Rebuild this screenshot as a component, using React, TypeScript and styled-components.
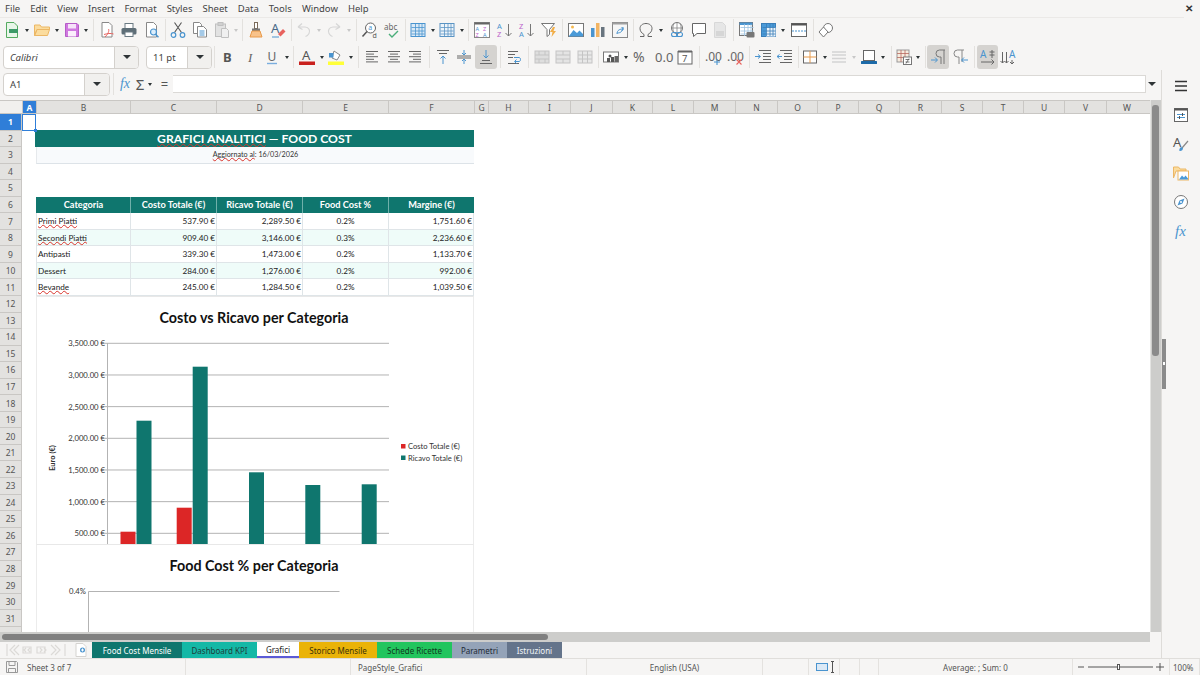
import React from 'react';
import styled, { createGlobalStyle } from 'styled-components';

const GlobalStyle = createGlobalStyle`
  html, body { margin: 0; padding: 0; background: #f6f5f4; }
  body { font-family: "Noto Sans", "Open Sans", sans-serif; color: #3d3d3d; }
`;

const T = ({ x, y, s = 7, c = '#444', w = 400, children }: { x: number; y: number; s?: number; c?: string; w?: number; children: React.ReactNode }) => (
  <text x={x} y={y} fontSize={s} fill={c} fontWeight={w} fontFamily="'Noto Sans', sans-serif">
    {children}
  </text>
);

const gridLines = (color: string) => (
  <path d="M1.5 5.5h13M1.5 9h13M1.5 12h13M5.5 2v12M9 2v12M12 2v12" stroke={color} strokeWidth=".8" fill="none" />
);

const alignLines = (rows: [number, number][], color = '#666') => (
  <path d={rows.map(([a, b], i) => `M${a} ${2.5 + i * 2.6}H${b}`).join('')} stroke={color} fill="none" />
);

const icons: Record<string, React.ReactNode> = {
  newDoc: (
    <>
      <path d="M2.5 .5h7.5l3.5 3.5v11.5h-11z" fill="#e8f6e9" stroke="#55ab60" />
      <rect x="5" y="7" width="9" height="4" fill="#3d9a68" />
    </>
  ),
  open: <path d="M.5 13.5V3h5.5l1.5 2h8v2.5H3zM.5 13.5l2.500-6h12.500l-2 6z" fill="#fbdc9e" stroke="#ecb765" />,
  save: (
    <>
      <path d="M1.5 1.5h11.500l1.500 1.500v11.500h-13z" fill="#d078e0" stroke="#b65cc8" />
      <rect x="4" y="2" width="8" height="4.500" fill="#f6e3f9" />
      <rect x="4" y="9" width="8" height="5.500" fill="#fbeefc" />
    </>
  ),
  pdf: (
    <>
      <path d="M3 .5h7l3 3v11.500h-10z" fill="#fff" stroke="#888" />
      <path d="M6 15c3-3 4.500-6 3.500-8M5 12.500c3-1 7-1.500 9.500-.5" stroke="#e8625e" fill="none" />
    </>
  ),
  print: (
    <>
      <rect x="4" y="1.500" width="8" height="5" fill="#fff" stroke="#6a7a83" />
      <rect x=".5" y="6" width="15" height="6.500" rx="1.500" fill="#5e6e77" />
      <rect x="4" y="10" width="8" height="4.500" fill="#fff" stroke="#6a7a83" />
    </>
  ),
  preview: (
    <>
      <path d="M2.500 .5h7l3 3v11.500h-10z" fill="#fff" stroke="#888" />
      <circle cx="9.500" cy="10" r="3" fill="#dceefc" stroke="#4a94cf" strokeWidth="1.200" />
      <path d="M11.500 12.200l3 3" stroke="#4a94cf" strokeWidth="1.500" />
    </>
  ),
  cut: (
    <>
      <path d="M4.500 10.500L11.500 .5M11.500 10.500L4.500 .5" stroke="#555" strokeWidth="1.100" />
      <circle cx="3.500" cy="13" r="2.300" fill="none" stroke="#4a94cf" strokeWidth="1.200" />
      <circle cx="12.500" cy="13" r="2.300" fill="none" stroke="#4a94cf" strokeWidth="1.200" />
    </>
  ),
  copy: (
    <>
      <path d="M1.500 .5h6l2 2v9h-8z" fill="#fff" stroke="#888" />
      <path d="M5.500 4.500h6l3 3v7.500h-9z" fill="#fff" stroke="#888" />
      <path d="M7.500 9h5M7.500 11h5M7.500 13h5" stroke="#4a94cf" />
    </>
  ),
  paste: (
    <>
      <rect x="1.500" y="2" width="10" height="12.500" fill="#e2e2e2" stroke="#c0c0c0" />
      <rect x="4" y=".5" width="5" height="3" fill="#d0d0d0" stroke="#c0c0c0" />
      <path d="M7.500 6.500h5l2 2v7h-7z" fill="#f0f0f0" stroke="#c0c0c0" />
    </>
  ),
  clone: (
    <>
      <rect x="6.500" y=".5" width="3" height="6" fill="#fff" stroke="#7a6a5a" />
      <rect x="4" y="6.500" width="8" height="2.500" fill="#777" />
      <path d="M4 9h8l2 6H2z" fill="#f8c28a" stroke="#e89a4a" />
    </>
  ),
  clear: (
    <>
      <T x={1} y={11} s={13} c="#4a6a88">A</T>
      <path d="M8 12l5-5 2.500 2.500-5 5z" fill="#e8625e" />
      <path d="M2 15h7" stroke="#4a94cf" />
    </>
  ),
  undo: <path d="M2 5l4-3.500M2 5l4.500 2.500M2 5h7c4 0 5.500 4 4 6.500-.8 1.500-2 2.500-3.500 3" fill="none" stroke="#d6d6d6" strokeWidth="1.200" />,
  redo: <path d="M14 5l-4-3.500M14 5l-4.500 2.500M14 5H7c-4 0-5.500 4-4 6.500.8 1.500 2 2.500 3.500 3" fill="none" stroke="#d6d6d6" strokeWidth="1.200" />,
  find: (
    <>
      <circle cx="8.500" cy="6" r="5" fill="#fff" stroke="#666" />
      <path d="M5 9.500l-4.500 5" stroke="#555" strokeWidth="1.500" />
      <T x={6.200} y={8} s={7} c="#4a94cf">a</T>
      <T x={10.500} y={15.500} s={7} c="#555">d</T>
    </>
  ),
  spell: (
    <>
      <T x={0} y={7.500} s={8} c="#666">abc</T>
      <path d="M5 12l3 3 6-6" fill="none" stroke="#4aae7a" strokeWidth="1.400" />
    </>
  ),
  table: (
    <>
      <rect x="1" y="1.500" width="14" height="13" fill="#dbe9f6" stroke="#4a94cf" />
      {gridLines('#4a94cf')}
    </>
  ),
  grid: (
    <>
      <rect x="1" y="1.500" width="14" height="13" fill="#edf4fa" stroke="#5a94c4" />
      {gridLines('#5a94c4')}
    </>
  ),
  sortHead: (
    <>
      <rect x=".5" y=".5" width="15" height="15" fill="#fff" stroke="#888" />
      <rect x=".5" y=".5" width="15" height="2" fill="#666" />
      <T x={1.500} y={9} s={5.500} c="#4a94cf">A</T>
      <T x={9} y={9} s={5.500} c="#bb62ca">Z</T>
      <T x={1.500} y={15} s={5.500} c="#bb62ca">Z</T>
      <T x={9} y={15} s={5.500} c="#4a94cf">A</T>
    </>
  ),
  sortAsc: (
    <>
      <T x={0} y={7} s={7.500} c="#4a94cf">A</T>
      <T x={0} y={15} s={7.500} c="#bb62ca">Z</T>
      <path d="M11.500 2v12M8.500 11l3 3 3-3" fill="none" stroke="#777" />
    </>
  ),
  sortDesc: (
    <>
      <T x={0} y={7} s={7.500} c="#bb62ca">Z</T>
      <T x={0} y={15} s={7.500} c="#4a94cf">A</T>
      <path d="M11.500 2v12M8.500 11l3 3 3-3" fill="none" stroke="#777" />
    </>
  ),
  filter: (
    <>
      <path d="M.5 1.500h13L8.500 7.500v5l-2.500 2v-7z" fill="#fff" stroke="#777" />
      <path d="M12 5l-3 5h2.500l-1 5 4.500-6h-2.500l1.500-4z" fill="#f2ae48" />
    </>
  ),
  image: (
    <>
      <rect x=".5" y="1.500" width="15" height="13" fill="#fff" stroke="#777" />
      <circle cx="4.500" cy="5" r="1.500" fill="#f5b94f" />
      <path d="M1 14l4.500-6 3.500 3 2.500-2.500L15 12v2.500H1z" fill="#4a9ad8" />
    </>
  ),
  chart: (
    <>
      <rect x="1" y="6" width="3.500" height="9" fill="#4a94cf" />
      <rect x="6" y="1" width="3.500" height="14" fill="#f2b463" />
      <rect x="11" y="5" width="3.500" height="10" fill="#68747e" />
    </>
  ),
  pivot: (
    <>
      <rect x=".5" y=".5" width="15" height="15" fill="#f6f6f6" stroke="#888" />
      <rect x=".5" y=".5" width="15" height="2" fill="#a0a0a0" />
      <path d="M5 12c0-4 3-5 6-5M9.500 5L11.500 7l-2 2M11 5c0 4-2 6-6 6" fill="none" stroke="#4a94cf" />
    </>
  ),
  omega: <path d="M2 14.500h4v-2C3.500 11 2 9 2 6.500 2 3.500 4.500 1.500 8 1.500s6 2 6 5c0 2.500-1.500 4.500-4 6v2h4" fill="none" stroke="#666" />,
  link: (
    <>
      <circle cx="8" cy="6" r="5.500" fill="#fff" stroke="#777" />
      <path d="M2.500 6h11M8 .5v11M5 1.500c-1.500 3-1.500 6 0 9M11 1.500c1.500 3 1.500 6 0 9" fill="none" stroke="#777" strokeWidth=".7" />
      <rect x="2.500" y="10.500" width="6" height="4" rx="2" fill="none" stroke="#4a94cf" strokeWidth="1.100" />
      <rect x="7.500" y="10.500" width="6" height="4" rx="2" fill="none" stroke="#4a94cf" strokeWidth="1.100" />
    </>
  ),
  comment: <path d="M1.500 1.500h13v10H6l-3.500 3v-3h-1z" fill="#fff" stroke="#666" />,
  headerFooter: (
    <>
      <path d="M2.500 .5h8l3 3v12h-11z" fill="#e6e6e6" stroke="#d8d8d8" />
      <rect x="4" y="9" width="8" height="5" fill="#d6d6d6" />
    </>
  ),
  printArea: (
    <>
      <rect x=".5" y=".5" width="13" height="13" fill="#fff" stroke="#777" />
      <rect x=".5" y=".5" width="13" height="2.500" fill="#4a94cf" />
      {gridLines('#9cc2e0')}
      <rect x="7.500" y="10" width="8" height="5.500" rx="1" fill="#777" />
    </>
  ),
  freeze: (
    <>
      <rect x=".5" y="1.500" width="14" height="13" fill="#4a9ad8" stroke="#3a7eb8" />
      <rect x="5" y="5.500" width="9.500" height="9" fill="#edf4fa" />
      {gridLines('#3a7eb8')}
    </>
  ),
  split: (
    <>
      <rect x=".5" y="1.500" width="15" height="13" fill="#fff" stroke="#666" />
      <rect x=".5" y="1.500" width="15" height="2" fill="#555" />
      <path d="M1 9h14" stroke="#4a94cf" strokeDasharray="2 1" />
    </>
  ),
  shapes: (
    <>
      <circle cx="10" cy="6" r="4.500" fill="#fff" stroke="#777" />
      <path d="M5.500 5l-4.500 5 4.500 5 4.500-5z" fill="#fff" stroke="#777" />
    </>
  ),
  bold: <T x={3} y={13} s={13} c="#555" w={700}>B</T>,
  italic: (
    <text x="5" y="13" fontSize="13" fontStyle="italic" fill="#666" fontFamily="'Liberation Serif', serif">I</text>
  ),
  underline: (
    <>
      <T x={2.500} y={11.500} s={12} c="#666">U</T>
      <path d="M2 14.500h10" stroke="#7aadde" strokeWidth="1.400" />
    </>
  ),
  fontColor: (
    <>
      <T x={3} y={11} s={13} c="#555">A</T>
      <rect x="0" y="12.500" width="16" height="3.500" fill="#c9211e" />
    </>
  ),
  bgColor: (
    <>
      <path d="M6 2l6 4-3 5-5-2z" fill="#fff" stroke="#888" />
      <rect x="1" y="4" width="4.500" height="4.500" fill="#4a94cf" />
      <rect x="0" y="12.500" width="16" height="3.500" fill="#ffff38" />
    </>
  ),
  alignLeft: alignLines([[2, 14], [2, 10], [2, 14], [2, 10], [2, 14]]),
  alignCenter: alignLines([[2, 14], [4, 12], [2, 14], [4, 12], [2, 14]]),
  alignRight: alignLines([[2, 14], [6, 14], [2, 14], [6, 14], [2, 14]]),
  alignTop: (
    <>
      <path d="M2 1.500h12M4 4.500h8" stroke="#666" fill="none" />
      <path d="M8 15V7M5.500 9.500L8 7l2.500 2.500" stroke="#4a94cf" fill="none" />
    </>
  ),
  alignMid: (
    <>
      <path d="M1 7h14M1 9h14" stroke="#666" fill="none" />
      <path d="M8 1v5M6 4l2 2 2-2M8 15v-5M6 12l2-2 2 2" stroke="#4a94cf" fill="none" />
    </>
  ),
  alignBot: (
    <>
      <path d="M2 14.500h12M4 11.500h8" stroke="#666" fill="none" />
      <path d="M8 1v8M5.500 6.500L8 9l2.500-2.500" stroke="#4a94cf" fill="none" />
    </>
  ),
  wrap: (
    <>
      <path d="M2 2.500h10M2 5.500h7M2 8.500h5M2 14.500h11" stroke="#666" />
      <path d="M8 8.500h5c2 0 2 4 0 4H9M10.500 10.500L8.500 12.500l2 2" fill="none" stroke="#4a94cf" />
    </>
  ),
  merge: (
    <>
      <rect x="1" y="2" width="14" height="12" fill="#dedede" stroke="#c4c4c4" />
      <path d="M1 6h14M1 10h14M5 2v4M11 2v4M5 10v4M11 10v4" stroke="#c4c4c4" />
    </>
  ),
  mergeCenter: (
    <>
      <rect x="1" y="2" width="14" height="12" fill="#e4e4e4" stroke="#c4c4c4" />
      <path d="M1 6h14M1 10h14M8 2v4M8 10v4" stroke="#c4c4c4" />
    </>
  ),
  unmerge: (
    <>
      <rect x="1" y="2" width="14" height="12" fill="#e8e8e8" stroke="#c4c4c4" />
      <path d="M1 6h14M1 10h14M5.500 2v12M10.500 2v12" stroke="#c4c4c4" />
    </>
  ),
  currency: (
    <>
      <rect x=".5" y="3" width="15" height="10" fill="#fff" stroke="#777" />
      <circle cx="7" cy="7" r="1.500" fill="#555" />
      <rect x="4" y="9" width="3" height="4" fill="#555" />
      <rect x="8" y="8" width="3" height="5" fill="#555" />
      <rect x="11.500" y="7" width="3.500" height="6" fill="#666" />
    </>
  ),
  percent: <T x={0} y={13} s={14} c="#666">%</T>,
  number: <T x={0} y={13} s={13} c="#666">0.0</T>,
  date: (
    <>
      <rect x="1" y="2.500" width="14" height="12.500" fill="#fff" stroke="#666" />
      <rect x="1" y="1.500" width="14" height="2" fill="#666" />
      <T x={5} y={13} s={9.500} c="#555">7</T>
    </>
  ),
  addDec: (
    <>
      <T x={0} y={12} s={12} c="#666">.00</T>
      <path d="M12 10v6M9 13h6" stroke="#4a94cf" strokeWidth="1.100" />
    </>
  ),
  delDec: (
    <>
      <T x={0} y={12} s={12} c="#666">.00</T>
      <path d="M9.500 10.500l5 5M14.500 10.500l-5 5" stroke="#e8625e" strokeWidth="1.100" />
    </>
  ),
  indentInc: (
    <>
      <path d="M4 1.500h12M8 4.500h8M8 7.500h8M8 10.500h8M4 13.500h12" stroke="#666" />
      <path d="M0 7.500h5M3 5.500l2.500 2-2.500 2" fill="none" stroke="#4a94cf" />
    </>
  ),
  indentDec: (
    <>
      <path d="M4 1.500h12M8 4.500h8M8 7.500h8M8 10.500h8M4 13.500h12" stroke="#666" />
      <path d="M6 7.500H1M3.500 5.500L1 7.500l2.500 2" fill="none" stroke="#4a94cf" />
    </>
  ),
  borders: (
    <>
      <rect x="1.500" y="2" width="13" height="12" fill="#fff" stroke="#666" />
      <path d="M8 2v12M1.500 8h13" stroke="#e89a4a" />
    </>
  ),
  borderStyle: <path d="M1 3h14M1 6h14M1 9.500h14M1 13h14" stroke="#d4d4d4" strokeWidth="1.400" />,
  borderColor: (
    <>
      <rect x="2.500" y="1.500" width="11" height="10" fill="#fff" stroke="#666" />
      <rect x="0" y="12" width="16" height="3" rx=".5" fill="#1c6aa8" />
    </>
  ),
  condFormat: (
    <>
      <rect x="1" y="1" width="12" height="12" fill="#f7ecdf" stroke="#999" />
      <path d="M1 4.500h12M1 8.500h12M5 1v12M9 1v12" stroke="#b86a60" strokeWidth=".8" />
      <rect x="7.500" y="8" width="8" height="7.500" fill="#fff" stroke="#777" />
      <path d="M9.500 10.500h4M9.500 13h4M13 9.500l-3 5" stroke="#555" strokeWidth=".8" />
    </>
  ),
  paraLtr: (
    <>
      <path d="M15 1H9.500a3 3 0 0 0 0 7H11V15M14 1v14" fill="none" stroke="#777" />
      <path d="M1 11h6M5 8.500L7.500 11 5 13.500" fill="none" stroke="#4a94cf" />
    </>
  ),
  paraRtl: (
    <>
      <path d="M11 1H4.500a3 3 0 0 0 0 7H6V15M9 1v12" fill="none" stroke="#888" />
      <path d="M15 11H9M11 8.500L8.500 11l2.500 2.500" fill="none" stroke="#4a94cf" />
    </>
  ),
  vertLtr: (
    <>
      <T x={0} y={9} s={10} c="#4a94cf">A</T>
      <path d="M12 1v8M9.500 3h5M9.500 6h5M1 13h13M11.500 10.500l2.500 2.500-2.500 2.500" fill="none" stroke="#666" />
    </>
  ),
  vertStack: (
    <>
      <T x={8} y={9} s={10} c="#4a94cf">A</T>
      <path d="M1.500 3v11M5.500 3v11M-.5 12l2 2 2-2M3.500 12l2 2 2-2M11 11v4M9 13l2 2 2-2" fill="none" stroke="#666" />
    </>
  ),
};

type ToolItem = [string, number, boolean?];

const toolsTop: ToolItem[] = [
  ['newDoc', 22], ['arrow', 8], ['open', 22], ['arrow', 8], ['save', 21], ['arrow', 8], ['sep', 6],
  ['pdf', 22], ['print', 22], ['preview', 23], ['sep', 4],
  ['cut', 22], ['copy', 22], ['paste', 22], ['arrowOff', 6], ['sep', 6],
  ['clone', 22], ['clear', 22], ['sep', 4],
  ['undo', 22], ['arrowOff', 8], ['redo', 22], ['arrowOff', 8], ['sep', 6],
  ['find', 22], ['spell', 22], ['sep', 4],
  ['table', 22], ['arrow', 7], ['grid', 22], ['arrow', 8], ['sep', 5],
  ['sortHead', 22], ['sortAsc', 23], ['sortDesc', 22], ['filter', 22], ['sep', 4],
  ['image', 23], ['chart', 22], ['pivot', 22], ['sep', 4],
  ['omega', 21], ['arrow', 9], ['link', 23], ['comment', 21], ['headerFooter', 22], ['sep', 4],
  ['printArea', 24], ['freeze', 19], ['arrow', 9], ['split', 24], ['sep', 4], ['shapes', 22],
];

const toolsFormat: ToolItem[] = [
  ['sep', 5], ['bold', 22], ['italic', 23], ['underline', 21], ['arrow', 8], ['sep', 5],
  ['fontColor', 22], ['arrow', 7], ['bgColor', 22], ['arrow', 8], ['sep', 6],
  ['alignLeft', 22], ['alignCenter', 21], ['alignRight', 22], ['sep', 6],
  ['alignTop', 21], ['alignMid', 22], ['alignBot', 22, true], ['sep', 6],
  ['wrap', 22], ['sep', 6],
  ['merge', 21], ['mergeCenter', 22], ['unmerge', 22], ['sep', 4],
  ['currency', 22], ['arrow', 8], ['percent', 22], ['number', 22], ['date', 22], ['sep', 6],
  ['addDec', 22], ['delDec', 22], ['sep', 6],
  ['indentInc', 21], ['indentDec', 22], ['sep', 6],
  ['borders', 17], ['arrow', 14], ['borderStyle', 14], ['arrowOff', 15], ['borderColor', 16], ['arrow', 11], ['sep', 6],
  ['condFormat', 19], ['arrow', 10], ['sep', 4],
  ['paraLtr', 22, true], ['paraRtl', 23], ['sep', 5],
  ['vertLtr', 21, true], ['vertStack', 22],
];

const menus = ['File', 'Edit', 'View', 'Insert', 'Format', 'Styles', 'Sheet', 'Data', 'Tools', 'Window', 'Help'];

const columns: [string, number][] = [
  ['A', 14], ['B', 94], ['C', 86], ['D', 86], ['E', 86], ['F', 86], ['G', 14], ['H', 40], ['I', 42], ['J', 42], ['K', 40], ['L', 41],
  ['M', 42], ['N', 42], ['O', 40], ['P', 41], ['Q', 41], ['R', 42], ['S', 41], ['T', 41], ['U', 41], ['V', 42], ['W', 41],
];

// the 32nd row is cut by the scrollbar, so only its header box shows
const rowNumbers = Array.from({ length: 31 }, (_, i) => i + 1);

const headers = ['Categoria', 'Costo Totale (€)', 'Ricavo Totale (€)', 'Food Cost %', 'Margine (€)'];

const rows: { name: string; typo: boolean; values: string[] }[] = [
  { name: 'Primi Piatti', typo: true, values: ['537.90 €', '2,289.50 €', '0.2%', '1,751.60 €'] },
  { name: 'Secondi Piatti', typo: true, values: ['909.40 €', '3,146.00 €', '0.3%', '2,236.60 €'] },
  { name: 'Antipasti', typo: false, values: ['339.30 €', '1,473.00 €', '0.2%', '1,133.70 €'] },
  { name: 'Dessert', typo: false, values: ['284.00 €', '1,276.00 €', '0.2%', '992.00 €'] },
  { name: 'Bevande', typo: true, values: ['245.00 €', '1,284.50 €', '0.2%', '1,039.50 €'] },
];

const tabs = [
  { name: 'Food Cost Mensile', w: 90, bg: '#0f766e', fg: '#ffffff' },
  { name: 'Dashboard KPI', w: 75, bg: '#14b8a6', fg: '#1f3d3a' },
  { name: 'Grafici', w: 42, bg: '#ffffff', fg: '#222222', active: true },
  { name: 'Storico Mensile', w: 78, bg: '#eab308', fg: '#3a3208' },
  { name: 'Schede Ricette', w: 75, bg: '#22c55e', fg: '#103a20' },
  { name: 'Parametri', w: 55, bg: '#94a3b8', fg: '#222a36' },
  { name: 'Istruzioni', w: 55, bg: '#64748b', fg: '#f1f5f9' },
];

const deckIcons: React.ReactNode[] = [
  <path key="menu" d="M2 3.500h12M2 8h12M2 12.500h12" stroke="#333" strokeWidth="1.400" />,
  <g key="props">
    <rect x="1.500" y="1.500" width="13" height="13" fill="#fff" stroke="#666" />
    <rect x="1.500" y="1.500" width="13" height="2" fill="#555" />
    <path d="M4 7.500h8M4 10.500h8" stroke="#4a94cf" />
    <path d="M9.500 6v3M6.500 9v3" stroke="#555" />
  </g>,
  <g key="styles">
    <T x={0} y={11} s={13} c="#555">A</T>
    <path d="M15 5l-6 7" stroke="#888" strokeWidth="1.200" />
    <path d="M8 11c-1.500 1-2 3-1.500 4 2 .3 3.500-1 3.500-3z" fill="#4a94cf" />
  </g>,
  <g key="gallery">
    <path d="M.5 13V2h5l1.500 2h6v2H3z" fill="#fbdc9e" stroke="#ecb765" />
    <rect x="5" y="6" width="10.500" height="9" fill="#fff" stroke="#ecb765" />
    <path d="M6 14.500l3-4 2 2 1.500-2 2.500 3v1z" fill="#4a9ad8" />
  </g>,
  <g key="nav">
    <circle cx="8" cy="8" r="6.500" fill="#fff" stroke="#777" />
    <path d="M11.500 4.500L9.500 9.500 4.500 11.500 6.500 6.500z" fill="#4a94cf" />
    <circle cx="8" cy="8" r="1" fill="#fff" />
  </g>,
  <text key="fx" x="2" y="13" fontSize="15" fontStyle="italic" fill="#4a94cf" fontFamily="'Liberation Serif', serif">fx</text>,
];

const Page = styled.div`
  width: 1200px;
  height: 675px;
  overflow: hidden;
  display: flex;
  flex-direction: column;
  background: #f6f5f4;
  font-size: 9.5px;
`;

const MenuBar = styled.div`
  height: 18px;
  box-sizing: border-box;
  display: flex;
  align-items: center;
  gap: 10px;
  padding: 0 16px 2px 5px;
  font-size: 9.5px;
  color: #444;
  position: relative;
`;

const MenuRule = styled.div`
  position: absolute;
  left: 0;
  right: 16px;
  bottom: 0;
  height: 1px;
  background: #ebe9e7;
`;

const CloseMark = styled.span`
  margin-left: auto;
  font-size: 10px;
  font-weight: 700;
  color: #333;
  margin-right: -9px;
`;

const ToolbarRow = styled.div<{ $left: number; $lift?: number }>`
  height: 26px;
  box-sizing: border-box;
  display: flex;
  align-items: center;
  padding-left: ${(p) => p.$left}px;
  padding-bottom: ${(p) => p.$lift ?? 0}px;
`;

const Slot = styled.div<{ $w: number; $active?: boolean }>`
  width: ${(p) => p.$w}px;
  height: 24px;
  flex: none;
  display: flex;
  align-items: center;
  justify-content: center;
  border-radius: 3px;
  background: ${(p) => (p.$active ? '#d5d3d0' : 'transparent')};
  svg {
    overflow: visible;
  }
`;

const Caret = styled.span<{ $off?: boolean; $big?: boolean }>`
  display: block;
  width: 0;
  height: 0;
  border-left: ${(p) => (p.$big ? 4 : 2.5)}px solid transparent;
  border-right: ${(p) => (p.$big ? 4 : 2.5)}px solid transparent;
  border-top: ${(p) => (p.$big ? 4 : 3)}px solid ${(p) => (p.$off ? '#c8c8c8' : '#2e3436')};
`;

const Divider = styled.span`
  display: block;
  width: 1px;
  height: 22px;
  background: #e3e1de;
`;

const Combo = styled.div<{ $w: number; $gap?: number }>`
  width: ${(p) => p.$w}px;
  height: 23px;
  box-sizing: border-box;
  flex: none;
  margin-right: ${(p) => p.$gap ?? 0}px;
  display: flex;
  background: #fff;
  border: 1px solid #d4d1cd;
  border-radius: 4px;
  overflow: hidden;
`;

const ComboText = styled.div<{ $italic?: boolean }>`
  flex: 1;
  display: flex;
  align-items: center;
  padding-left: 6px;
  font-size: 9.5px;
  color: #444;
  font-style: ${(p) => (p.$italic ? 'italic' : 'normal')};
`;

const ComboButton = styled.div<{ $w: number }>`
  width: ${(p) => p.$w}px;
  flex: none;
  display: flex;
  align-items: center;
  justify-content: center;
  background: #f1f0ee;
  border-left: 1px solid #d4d1cd;
`;

const Workspace = styled.div`
  height: 588px;
  display: flex;
`;

const MainColumn = styled.div`
  width: 1161px;
  display: flex;
  flex-direction: column;
`;

const FormulaBar = styled.div`
  height: 30px;
  box-sizing: border-box;
  padding: 2px 0 4px 3px;
  display: flex;
  align-items: center;
`;

const FormulaInput = styled.div`
  width: 973px;
  height: 18px;
  flex: none;
  box-sizing: border-box;
  background: #fff;
  border: 1px solid #dbd9d6;
  border-left: none;
`;

const FormulaGlyph = styled.div<{ $w: number; $color?: string; $serif?: boolean; $size?: number }>`
  width: ${(p) => p.$w}px;
  flex: none;
  text-align: center;
  color: ${(p) => p.$color ?? '#555'};
  font-size: ${(p) => p.$size ?? 14}px;
  font-family: ${(p) => (p.$serif ? '"Liberation Serif", serif' : '"Noto Sans", sans-serif')};
  font-style: ${(p) => (p.$serif ? 'italic' : 'normal')};
  display: flex;
  align-items: center;
  justify-content: center;
`;

const SheetArea = styled.div`
  height: 532px;
  display: flex;
`;

const SheetMain = styled.div`
  width: 1150px;
  display: flex;
  flex-direction: column;
  background: #fff;
  overflow: hidden;
`;

const ColumnStrip = styled.div`
  height: 14px;
  flex: none;
  display: flex;
  background: #e3e2e0;
  border-top: 1px solid #c9c7c4;
  border-bottom: 1px solid #c9c7c4;
  box-sizing: border-box;
`;

const CornerCell = styled.div`
  width: 22px;
  flex: none;
  background: #f1f0ee;
`;

const ColumnCell = styled.div<{ $w: number; $on?: boolean }>`
  width: ${(p) => p.$w}px;
  box-sizing: border-box;
  flex: none;
  display: flex;
  align-items: center;
  justify-content: center;
  font-size: 8.5px;
  color: ${(p) => (p.$on ? '#fff' : '#555')};
  font-weight: ${(p) => (p.$on ? 700 : 400)};
  background: ${(p) => (p.$on ? '#2f7ed8' : 'transparent')};
  border-left: 1px solid #c9c7c4;
`;

const SheetBody = styled.div`
  flex: 1;
  display: flex;
  min-height: 0;
`;

const RowStrip = styled.div`
  width: 22px;
  flex: none;
  display: flex;
  flex-direction: column;
  background: #e3e2e0;
`;

const RowCell = styled.div<{ $on?: boolean }>`
  height: 16.55px;
  flex: none;
  box-sizing: border-box;
  display: flex;
  align-items: center;
  justify-content: center;
  font-size: 8.5px;
  color: ${(p) => (p.$on ? '#fff' : '#555')};
  font-weight: ${(p) => (p.$on ? 700 : 400)};
  background: ${(p) => (p.$on ? '#2f7ed8' : 'transparent')};
  border-bottom: 1px solid #c9c7c4;
  border-right: 1px solid #c9c7c4;
`;

const CellGrid = styled.div`
  flex: 1;
  display: grid;
  grid-template-columns: 14px 94px 86px 86px 86px 86px 1fr;
  grid-template-rows: repeat(32, 16.55px);
  font-family: Lato, "Liberation Sans", sans-serif;
  color: #222;
`;

const CursorCell = styled.div`
  grid-column: 1;
  grid-row: 1;
  border: 1px solid #2f7ed8;
  box-sizing: border-box;
  position: relative;
  &::after {
    content: '';
    position: absolute;
    right: -2px;
    bottom: -2px;
    width: 3px;
    height: 3px;
    background: #2f7ed8;
  }
`;

const TitleBanner = styled.div`
  grid-column: 2 / 7;
  grid-row: 2;
  margin: -1px 0 0 -1px;
  background: #0f766e;
  color: #fff;
  font-size: 12.2px;
  font-weight: 700;
  display: flex;
  align-items: center;
  justify-content: center;
`;

const SubBanner = styled.div`
  grid-column: 2 / 7;
  grid-row: 3;
  background: #f8fafc;
  border-bottom: 1px solid #dde3e8;
  border-left: 1px solid #e6e9ec;
  font-size: 7.2px;
  color: #333;
  display: flex;
  align-items: center;
  justify-content: center;
`;

const Typo = styled.span`
  text-decoration: underline wavy #d8342c;
  text-decoration-thickness: 1px;
  text-underline-offset: 0;
  text-decoration-skip-ink: none;
`;

const DataTable = styled.div`
  grid-column: 2 / 7;
  grid-row: 6 / 12;
  display: grid;
  grid-template-columns: subgrid;
  grid-template-rows: subgrid;
`;

const HeadCell = styled.div`
  box-sizing: border-box;
  background: #0f766e;
  color: #fff;
  font-size: 9.2px;
  font-weight: 700;
  padding-bottom: 2px;
  border-left: 1px solid #6fb0aa;
  &:first-child {
    border-left-color: #0f766e;
  }
  display: flex;
  align-items: center;
  justify-content: center;
`;

const DataCell = styled.div<{ $align: 'left' | 'center' | 'right'; $alt: boolean }>`
  box-sizing: border-box;
  background: ${(p) => (p.$alt ? '#effcf9' : '#fff')};
  border-left: 1px solid #dfe5e8;
  border-bottom: 1px solid #dfe5e8;
  &:nth-child(5n) {
    border-right: 1px solid #dfe5e8;
  }
  font-size: 8.2px;
  padding: 0 1px 0 1px;
  display: flex;
  align-items: center;
  justify-content: ${(p) => ({ left: 'flex-start', center: 'center', right: 'flex-end' }[p.$align])};
`;

const ChartFrame = styled.div<{ $from: number; $to: number }>`
  grid-column: 2 / 7;
  grid-row: ${(p) => p.$from} / ${(p) => p.$to};
  min-height: 0;
  overflow: hidden;
  background: #fff;
  border-left: 1px solid #ececec;
  border-right: 1px solid #ececec;
  border-top: 1px solid #e8e8e8;
  svg {
    display: block;
  }
`;

const VScroll = styled.div`
  width: 11px;
  flex: none;
  box-sizing: border-box;
  background: #cdcdcb;
  border-left: 1px solid #e4e4e2;
  padding: 5px 2px 0 1px;
`;

const VThumb = styled.div`
  height: 251px;
  border-radius: 3px;
  background: #8b8b8b;
`;

const HScroll = styled.div`
  height: 10px;
  flex: none;
  box-sizing: border-box;
  width: 1150px;
  background: #cdcdcb;
  padding: 2px 0 0 2px;
`;

const HThumb = styled.div`
  width: 546px;
  height: 6px;
  border-radius: 3px;
  background: #808080;
`;

const TabBar = styled.div`
  height: 16px;
  flex: none;
  display: flex;
`;

const TabNav = styled.div`
  width: 92px;
  flex: none;
  display: flex;
  align-items: center;
  padding-left: 6px;
  gap: 9px;
  box-sizing: border-box;
`;

const SheetTab = styled.div<{ $w: number; $bg: string; $fg: string; $active?: boolean }>`
  width: ${(p) => p.$w}px;
  flex: none;
  box-sizing: border-box;
  display: flex;
  align-items: center;
  justify-content: center;
  background: ${(p) => p.$bg};
  color: ${(p) => p.$fg};
  font-size: 8px;
  white-space: nowrap;
  border-bottom: ${(p) => (p.$active ? '2px solid #5b5bd6' : 'none')};
`;

const Deck = styled.div`
  width: 39px;
  flex: none;
  box-sizing: border-box;
  border-left: 1px solid #dedcd9;
  padding-top: 8px;
  display: flex;
  flex-direction: column;
  align-items: center;
  gap: 13px;
  position: relative;
`;

const DeckIcon = styled.div`
  height: 16px;
  svg {
    display: block;
    overflow: visible;
  }
`;

const DeckHandle = styled.div`
  position: absolute;
  left: 0;
  top: 269px;
  width: 4px;
  height: 50px;
  background: #8b8b8b;
  &::after {
    content: '';
    position: absolute;
    left: 1px;
    top: 23px;
    width: 2px;
    height: 3px;
    background: #fff;
  }
`;

const StatusBar = styled.div`
  height: 17px;
  flex: none;
  display: flex;
  border-top: 1px solid #e0dedb;
  box-sizing: border-box;
  font-size: 8px;
  color: #555;
`;

const StatusCell = styled.div<{ $w: number; $center?: boolean; $pad?: number }>`
  width: ${(p) => p.$w}px;
  flex: none;
  box-sizing: border-box;
  display: flex;
  align-items: center;
  gap: 8px;
  padding-left: ${(p) => p.$pad ?? 0}px;
  justify-content: ${(p) => (p.$center ? 'center' : 'flex-start')};
  border-right: 1px solid #e4e2df;
  white-space: nowrap;
`;

const Ico = ({ name }: { name: string }) => (
  <svg width="16" height="16" viewBox="0 0 16 16">
    {icons[name]}
  </svg>
);

const ToolItems = ({ items }: { items: ToolItem[] }) => (
  <>
    {items.map(([name, w, active], i) => (
      <Slot key={i} $w={w} $active={active}>
        {name === 'sep' && <Divider />}
        {name === 'arrow' && <Caret />}
        {name === 'arrowOff' && <Caret $off />}
        {icons[name] && <Ico name={name} />}
      </Slot>
    ))}
  </>
);

const CostChart = () => (
  <svg width="436" height="248" viewBox="37 297 436 248" fontFamily="Lato, sans-serif">
    <text x="254" y="323" fontSize="14.300" fontWeight="700" textAnchor="middle" fill="#111">
      Costo vs Ricavo per Categoria
    </text>
    {[3500, 3000, 2500, 2000, 1500, 1000, 500].map((v, i) => {
      const y = 343.3 + i * 31.67;
      return (
        <g key={v}>
          <path d={`M103 ${y}H389`} stroke="#b3b3b3" />
          <text x="105" y={y + 3} fontSize="7.700" textAnchor="end" fill="#333">
            {v.toLocaleString('en-US', { minimumFractionDigits: 2 })} €
          </text>
        </g>
      );
    })}
    <path d="M107.500 343V545" stroke="#b3b3b3" />
    {[
      [120.5, 531.7, '#dc2626'],
      [136.5, 420.7, '#0f766e'],
      [176.7, 507.7, '#dc2626'],
      [192.7, 366.7, '#0f766e'],
      [249, 472.3, '#0f766e'],
      [305.3, 485, '#0f766e'],
      [361.7, 484.3, '#0f766e'],
    ].map(([x, y, fill]) => (
      <rect key={String(x)} x={x as number} y={y as number} width="15" height={560 - (y as number)} fill={fill as string} />
    ))}
    <text transform="translate(55 458) rotate(-90)" fontSize="7.500" fontWeight="700" textAnchor="middle" fill="#333">
      Euro (€)
    </text>
    <rect x="401" y="444" width="4.500" height="4.500" fill="#dc2626" />
    <text x="408" y="449" fontSize="7.600" fill="#333">Costo Totale (€)</text>
    <rect x="401" y="455.500" width="4.500" height="4.500" fill="#0f766e" />
    <text x="408" y="460.500" fontSize="7.600" fill="#333">Ricavo Totale (€)</text>
  </svg>
);

const PercentChart = () => (
  <svg width="436" height="90" viewBox="37 545 436 90" fontFamily="Lato, sans-serif">
    <text x="254" y="571" fontSize="14.300" fontWeight="700" textAnchor="middle" fill="#111">
      Food Cost % per Categoria
    </text>
    <path d="M88.500 591.500H339.500M88.500 591.500V634" stroke="#b3b3b3" />
    <text x="86" y="594" fontSize="7.700" textAnchor="end" fill="#333">0.4%</text>
  </svg>
);

const App = () => (
  <Page>
    <GlobalStyle />
    <MenuBar>
      {menus.map((m) => (
        <span key={m}>{m}</span>
      ))}
      <CloseMark>✕</CloseMark>
      <MenuRule />
    </MenuBar>
    <ToolbarRow $left={1} $lift={2}>
      <ToolItems items={toolsTop} />
    </ToolbarRow>
    <ToolbarRow $left={3}>
      <Combo $w={136} $gap={7}>
        <ComboText $italic>Calibri</ComboText>
        <ComboButton $w={23}>
          <Caret $big />
        </ComboButton>
      </Combo>
      <Combo $w={66}>
        <ComboText>11 pt</ComboText>
        <ComboButton $w={23}>
          <Caret $big />
        </ComboButton>
      </Combo>
      <ToolItems items={toolsFormat} />
    </ToolbarRow>
    <Workspace>
      <MainColumn>
        <FormulaBar>
          <Combo $w={107} $gap={2}>
            <ComboText>A1</ComboText>
            <ComboButton $w={24}>
              <Caret $big />
            </ComboButton>
          </Combo>
          <Slot $w={2}>
            <Divider />
          </Slot>
          <FormulaGlyph $w={22} $color="#4a94cf" $serif>fx</FormulaGlyph>
          <FormulaGlyph $w={8} $size={15}>Σ</FormulaGlyph>
          <Slot $w={12}>
            <Caret />
          </Slot>
          <FormulaGlyph $w={17} $size={13}>=</FormulaGlyph>
          <FormulaInput />
          <Slot $w={11}>
            <Caret $big />
          </Slot>
        </FormulaBar>
        <SheetArea>
          <SheetMain>
            <ColumnStrip>
              <CornerCell />
              {columns.map(([c, w]) => (
                <ColumnCell key={c} $w={w} $on={c === 'A'}>
                  {c}
                </ColumnCell>
              ))}
            </ColumnStrip>
            <SheetBody>
              <RowStrip>
                {rowNumbers.map((n) => (
                  <RowCell key={n} $on={n === 1}>
                    {n}
                  </RowCell>
                ))}
                <RowCell />
              </RowStrip>
              <CellGrid>
                <CursorCell />
                <TitleBanner>
                  <span>
                    <Typo>GRAFICI ANALITICI</Typo> — FOOD COST
                  </span>
                </TitleBanner>
                <SubBanner>
                  <span>
                    <Typo>Aggiornato al</Typo>: 16/03/2026
                  </span>
                </SubBanner>
                <DataTable>
                  {headers.map((h) => (
                    <HeadCell key={h}>{h}</HeadCell>
                  ))}
                  {rows.map((r, i) => (
                    <React.Fragment key={r.name}>
                      <DataCell $align="left" $alt={i % 2 === 1}>
                        {r.typo ? <Typo>{r.name}</Typo> : r.name}
                      </DataCell>
                      {r.values.map((v, j) => (
                        <DataCell key={j} $align={j === 2 ? 'center' : 'right'} $alt={i % 2 === 1}>
                          {v}
                        </DataCell>
                      ))}
                    </React.Fragment>
                  ))}
                </DataTable>
                <ChartFrame $from={12} $to={27}>
                  <CostChart />
                </ChartFrame>
                <ChartFrame $from={27} $to={33}>
                  <PercentChart />
                </ChartFrame>
              </CellGrid>
            </SheetBody>
          </SheetMain>
          <VScroll>
            <VThumb />
          </VScroll>
        </SheetArea>
        <HScroll>
          <HThumb />
        </HScroll>
        <TabBar>
          <TabNav>
            <svg width="60" height="14" viewBox="0 0 60 14" fill="none" stroke="#dcdad7" strokeWidth="1.200">
              <path d="M1 1v12M9 2L4 7l5 5M13 2L8 7l5 5" />
              <path d="M17 4h8v6h-8zM20 5l-2 2 2 2M24 5l-2 2 2 2" />
              <path d="M31 4h8v6h-8zM34 5l2 2-2 2M38 5l2 2-2 2" />
              <path d="M45 2l5 5-5 5M49 2l5 5-5 5M59 1v12" />
            </svg>
            <svg width="13" height="14" viewBox="0 0 13 14">
              <path d="M1 .5h7l3 3v10H1z" fill="#fff" stroke="#d5d3d0" />
              <circle cx="7.500" cy="7" r="2.500" fill="#4a94cf" />
              <path d="M6 7h3M7.500 5.500v3" stroke="#fff" />
            </svg>
          </TabNav>
          {tabs.map((t) => (
            <SheetTab key={t.name} $w={t.w} $bg={t.bg} $fg={t.fg} $active={t.active}>
              {t.name}
            </SheetTab>
          ))}
        </TabBar>
      </MainColumn>
      <Deck>
        {deckIcons.map((d, i) => (
          <DeckIcon key={i}>
            <svg width="16" height="16" viewBox="0 0 16 16">
              {d}
            </svg>
          </DeckIcon>
        ))}
        <DeckHandle />
      </Deck>
    </Workspace>
    <StatusBar>
      <StatusCell $w={186} $pad={5}>
        <svg width="14" height="14" viewBox="0 0 14 14" fill="none" stroke="#999">
          <path d="M1.500 1.500h10l1 1v10h-11z" />
          <path d="M4 1.500v4h6v-4M3.500 12.500v-4h7v4" />
        </svg>
        <span>Sheet 3 of 7</span>
      </StatusCell>
      <StatusCell $w={165} />
      <StatusCell $w={236} $pad={7}>PageStyle_Grafici</StatusCell>
      <StatusCell $w={176} $center>English (USA)</StatusCell>
      <StatusCell $w={46} />
      <StatusCell $w={31} $pad={7}>
        <svg width="20" height="12" viewBox="0 0 20 12" fill="none">
          <rect x=".5" y="2.500" width="11" height="7" fill="#dbe9f6" stroke="#4a94cf" />
          <path d="M15 .5h3M15 11.500h3M16.500 .5v11" stroke="#555" />
        </svg>
      </StatusCell>
      <StatusCell $w={20} />
      <StatusCell $w={19} />
      <StatusCell $w={194} $center>Average: ; Sum: 0</StatusCell>
      <StatusCell $w={97} $pad={5}>
        <svg width="88" height="12" viewBox="0 0 88 12" fill="none" stroke="#555">
          <path d="M0 6h6M10 6h65M78 6h8M82 2v8" />
          <rect x="39.500" y="3.500" width="2" height="5" fill="#fff" />
        </svg>
      </StatusCell>
      <StatusCell $w={30} $pad={3}>100%</StatusCell>
    </StatusBar>
  </Page>
);

export default App;
